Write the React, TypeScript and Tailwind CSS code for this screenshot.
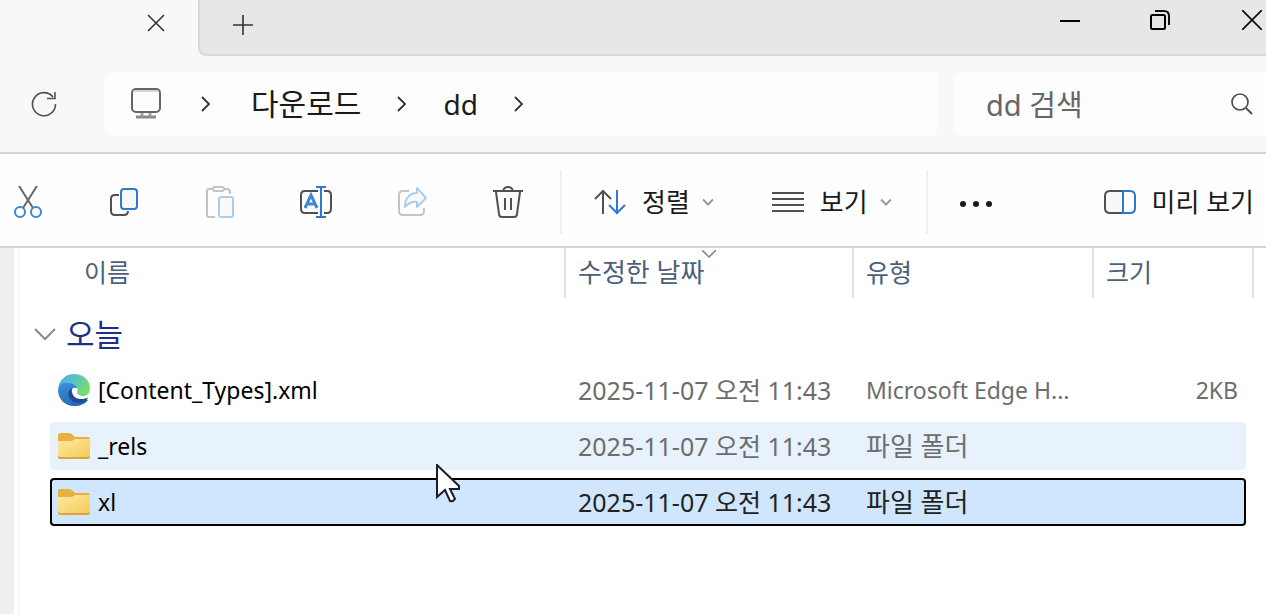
import type { ReactNode } from "react";

interface FileEntry {
  name: string;
  modified: string;
  type: string;
  size?: string;
  kind: "edge" | "folder";
  state?: "hover" | "selected";
}

const files: FileEntry[] = [
  {
    name: "[Content_Types].xml",
    modified: "2025-11-07 오전 11:43",
    type: "Microsoft Edge H...",
    size: "2KB",
    kind: "edge",
  },
  {
    name: "_rels",
    modified: "2025-11-07 오전 11:43",
    type: "파일 폴더",
    kind: "folder",
    state: "hover",
  },
  {
    name: "xl",
    modified: "2025-11-07 오전 11:43",
    type: "파일 폴더",
    kind: "folder",
    state: "selected",
  },
];

const rowStyles = {
  none: "border-transparent",
  hover: "border-[#e8f2fd] bg-[#e8f2fd]",
  selected: "border-black bg-[#d0e6fd]",
};

interface IconProps {
  width?: number;
  height?: number;
  children: ReactNode;
}

function Icon({ width = 32, height = 32, children }: IconProps) {
  return (
    <svg
      width={width}
      height={height}
      viewBox={`0 0 ${width} ${height}`}
      fill="none"
      stroke="#505050"
      strokeWidth="2"
      className="shrink-0"
      aria-hidden="true"
    >
      {children}
    </svg>
  );
}

function CrumbChevron() {
  return (
    <Icon width={10} height={18}>
      <path d="M1 2 8 9 1 16" stroke="#333" strokeWidth="1.8" />
    </Icon>
  );
}

function MenuChevron() {
  return (
    <Icon width={12} height={8}>
      <path d="m1 1.5 5 5 5-5" stroke="#9a9a9a" />
    </Icon>
  );
}

function EdgeIcon() {
  return (
    <svg width="32" height="32" viewBox="0 0 32 32" aria-hidden="true">
      <defs>
        <linearGradient id="edge-top" x1="0" y1="0.3" x2="1" y2="0.7">
          <stop offset="0" stopColor="#4aaeea" />
          <stop offset="0.5" stopColor="#5cc7b8" />
          <stop offset="1" stopColor="#7fe05c" />
        </linearGradient>
        <linearGradient id="edge-body" x1="0" y1="0" x2="0.6" y2="1">
          <stop offset="0" stopColor="#3d93de" />
          <stop offset="1" stopColor="#2463b8" />
        </linearGradient>
      </defs>
      <path
        d="M0 15C1 6 8 0 16 0c9 0 16 6 16 14 0 6-3 8-7 8-4 0-7-1-7-4L10 10C6 9 2 11 0 15Z"
        fill="url(#edge-top)"
      />
      <path
        d="M0 16C1 11 5 8 10 9c5 0 9 3 9 6l-3 5 14 6c-3 4-8 6-14 6C7 32 0 25 0 16Z"
        fill="url(#edge-body)"
      />
      <path
        d="M14 14c-4 2-5 8-1 12 4 4 11 3 14 1 2-1 3-3 3-4-5 2-14 0-14-5Z"
        fill="#1f4b93"
      />
      <path
        d="M14 18c-1-3 1-5 4-4 2 0 2 2 1 4 1 4 6 5 11 4l1 1c-8 4-16 2-17-5Z"
        fill="#fff"
      />
    </svg>
  );
}

function FolderIcon() {
  return (
    <svg width="32" height="26" viewBox="0 0 32 26" aria-hidden="true">
      <defs>
        <linearGradient id="folder-front" x1="0" y1="0" x2="1" y2="1">
          <stop offset="0" stopColor="#fde9a6" />
          <stop offset="1" stopColor="#f5cb55" />
        </linearGradient>
      </defs>
      <path
        d="M0 2q0-2 2-2h9q2 0 4 2l2 2h13q2 0 2 2v18H0Z"
        fill="#e8b13c"
      />
      <path d="M0 8h14l3-2h15v18q0 2-2 2H2q-2 0-2-2Z" fill="#d9a441" />
      <path d="M0 8h14l3-2h15v16q0 2-2 2H2q-2 0-2-2Z" fill="url(#folder-front)" />
    </svg>
  );
}

function TabStrip() {
  return (
    <header className="flex h-14 bg-[#f8f8f8]">
      <div className="flex w-[198px] items-start justify-end pr-[26px]">
        <button
          type="button"
          aria-label="탭 닫기"
          className="flex h-[46px] w-8 items-center justify-center"
        >
          <Icon width={18} height={18}>
            <path d="m1 1 16 16M17 1 1 17" stroke="#333" strokeWidth="1.6" />
          </Icon>
        </button>
      </div>
      <div className="flex flex-1 items-start justify-between overflow-hidden rounded-bl-lg border-b-2 border-l-2 border-[#d9d9d9] bg-[#e7e7e7]">
        <button
          type="button"
          aria-label="새 탭"
          className="flex h-[50px] w-[86px] items-center justify-center"
        >
          <Icon width={22} height={22}>
            <path d="M11 1v20M1 11h20" stroke="#333" strokeWidth="1.6" />
          </Icon>
        </button>
        <div className="-mr-8 flex">
          <button
            type="button"
            aria-label="최소화"
            className="flex h-10 w-[88px] items-center justify-center"
          >
            <Icon width={20} height={20}>
              <path d="M0 11h20" stroke="#000" />
            </Icon>
          </button>
          <button
            type="button"
            aria-label="이전 크기로 복원"
            className="flex h-10 w-[92px] items-center justify-center"
          >
            <Icon width={20} height={20}>
              <rect x="1" y="5" width="14" height="14" rx="1.5" stroke="#000" />
              <path d="M5 1h9q5 0 5 5v9" stroke="#111" />
            </Icon>
          </button>
          <button
            type="button"
            aria-label="닫기"
            className="flex h-10 w-[92px] items-center justify-center"
          >
            <Icon width={20} height={20}>
              <path d="m0 0 20 20M20 0 0 20" stroke="#111" strokeWidth="1.8" />
            </Icon>
          </button>
        </div>
      </div>
    </header>
  );
}

function AddressBar() {
  return (
    <div className="flex h-[98px] items-center gap-4 border-b-2 border-[#d5d5d5] bg-[#f8f8f8]">
      <button
        type="button"
        aria-label="새로 고침"
        className="flex h-16 w-[88px] shrink-0 items-center justify-center"
      >
        <Icon width={26} height={26}>
          <path d="M22 6A11.500 11.500 0 1 0 24.500 13M24 1v6.500h-8" strokeWidth="1.6" />
        </Icon>
      </button>
      <nav
        aria-label="경로"
        className="flex h-16 flex-1 items-center rounded-lg bg-[#fdfdfd] pl-[26px] text-[28px] text-[#1a1a1a]"
      >
        <Icon>
          <path d="M12 25v3M20 25v3" stroke="#a5a5a5" strokeWidth="3" />
          <path d="M6 29h20" stroke="#8a8a8a" strokeWidth="3" />
          <rect x="2" y="1" width="28" height="23" rx="4" stroke="#666" />
          <path d="M4 3h24" stroke="#d4d4d4" />
        </Icon>
        <span className="ml-[39px] flex items-center">
          <CrumbChevron />
        </span>
        <a href="#downloads" className="ml-10 text-[30px]">
          다운로드
        </a>
        <span className="ml-9 flex items-center">
          <CrumbChevron />
        </span>
        <a href="#dd" className="ml-9">
          dd
        </a>
        <span className="ml-9 flex items-center">
          <CrumbChevron />
        </span>
      </nav>
      <label className="flex h-16 w-[312px] items-center rounded-l-lg bg-[#fdfdfd] pr-3 pl-8">
        <input
          type="search"
          aria-label="dd 검색"
          placeholder="dd 검색"
          className="min-w-0 flex-1 bg-transparent text-[29px] outline-none placeholder:text-[#666]"
        />
        <Icon width={24} height={24}>
          <circle cx="10" cy="10" r="8" strokeWidth="1.7" />
          <path d="m16 16 6 6" />
        </Icon>
      </label>
    </div>
  );
}

function ToolButton({ label, children }: { label: string; children: ReactNode }) {
  return (
    <button
      type="button"
      aria-label={label}
      className="flex h-16 w-24 shrink-0 items-center justify-center"
    >
      {children}
    </button>
  );
}

function Toolbar() {
  return (
    <div className="flex h-[94px] items-center overflow-hidden border-b-2 border-[#d5d5d5] bg-[#fefefe] pt-1 text-[26px] whitespace-nowrap text-[#1a1a1a]">
      <div className="-ml-5 flex">
        <ToolButton label="잘라내기">
          <Icon>
            <path d="m7 0 14 22M25 0 11 22" stroke="#666" />
            <circle cx="8" cy="26" r="5" stroke="#3f86d6" />
            <circle cx="24" cy="26" r="5" stroke="#3f86d6" />
          </Icon>
        </ToolButton>
        <ToolButton label="복사">
          <Icon>
            <path d="M11 9H7q-4 0-4 4v12q0 4 4 4h9q4 0 4-4" />
            <rect x="13" y="3" width="16" height="20" rx="3" fill="#f7f7f7" stroke="#2f78d2" />
          </Icon>
        </ToolButton>
        <ToolButton label="붙여넣기">
          <Icon>
            <path
              d="M9 3H5q-2 0-2 2v24q0 2 2 2h6M20 3h3q3 0 3 3v2"
              stroke="#c4c4c4"
            />
            <rect x="9" y="1" width="11" height="4" rx="2" stroke="#c4c4c4" />
            <rect x="15" y="11" width="14" height="20" rx="2" fill="#fafafa" stroke="#a9cdf0" />
          </Icon>
        </ToolButton>
        <ToolButton label="이름 바꾸기">
          <Icon>
            <path d="M18 5H5q-4 0-4 4v14q0 4 4 4h13M24 5h3q4 0 4 4v14q0 4-4 4h-3" />
            <path d="m5 22 6-13 6 13M7 18h8" stroke="#3f86d6" strokeWidth="3" />
            <path d="M16 1h10M21 1v30M16 31h10" stroke="#2f78d2" />
          </Icon>
        </ToolButton>
        <ToolButton label="공유">
          <Icon>
            <path d="M13 5H7q-4 0-4 4v16q0 4 4 4h17q4 0 4-4v-3" stroke="#c4c4c4" />
            <path
              d="M21 2v5C13 7 9 13 9 21c4-4 7-6 12-5v5l9-9Z"
              fill="#fafafa"
              stroke="#a9cdf0"
              strokeLinejoin="round"
            />
          </Icon>
        </ToolButton>
        <ToolButton label="삭제">
          <Icon>
            <path d="M4 6h24l-3 23q0 2-3 2H10q-3 0-3-2Z" fill="#fafafa" stroke="none" />
            <path d="M1 5h30M4 6l3 22q0 3 3 3h12q3 0 3-3l3-22M11 5q1-4 5-4t5 4M13 12v12M19 12v12" />
          </Icon>
        </ToolButton>
      </div>
      <div className="ml-1 flex flex-1 items-center">
        <div className="h-16 w-0.5 shrink-0 bg-[#efefef]" />
        <button type="button" className="ml-8 flex shrink-0 items-center">
          <Icon>
            <path d="M9 28V5M1 13l8-8 8 8" />
            <path d="M23 4v24M15 19l8 8 8-8" stroke="#2f78d2" />
          </Icon>
          <span className="ml-4">정렬</span>
          <span className="ml-3">
            <MenuChevron />
          </span>
        </button>
        <button type="button" className="ml-[58px] flex shrink-0 items-center">
          <Icon>
            <path d="M0 7h32M0 13h32M0 19h32M0 25h32" />
          </Icon>
          <span className="ml-4">보기</span>
          <span className="ml-3">
            <MenuChevron />
          </span>
        </button>
        <div className="ml-[34px] h-16 w-0.5 shrink-0 bg-[#efefef]" />
        <button type="button" aria-label="자세히" className="ml-8 flex shrink-0">
          <Icon>
            <g fill="#1a1a1a" stroke="none">
              <circle cx="3" cy="18" r="3" />
              <circle cx="16" cy="18" r="3" />
              <circle cx="29" cy="18" r="3" />
            </g>
          </Icon>
        </button>
      </div>
      <button type="button" className="mr-3 flex shrink-0 items-center">
        <Icon>
          <path d="M19 5H6q-5 0-5 5v12q0 5 5 5h13" fill="#f8f8f8" />
          <path d="M19 5h7q5 0 5 5v12q0 5-5 5h-7Z" stroke="#2f78d2" />
        </Icon>
        <span className="ml-4">미리 보기</span>
      </button>
    </div>
  );
}

function FileRow({ file }: { file: FileEntry }) {
  const cell = `flex h-12 items-center border-y-2 ${rowStyles[file.state ?? "none"]}`;
  const color = file.state === "selected" ? "text-[#222]" : "text-[#6d6d6d]";
  const typeSize = file.kind === "folder" ? "text-[26px]" : "text-[23px]";

  return (
    <tr aria-selected={file.state === "selected"} className={color}>
      <td className="py-1 pl-[30px]">
        <div
          className={`${cell} gap-2 rounded-l-sm border-l-2 pl-1.5 text-[23px] text-black`}
        >
          {file.kind === "edge" ? <EdgeIcon /> : <FolderIcon />}
          <span>{file.name}</span>
        </div>
      </td>
      <td className="py-1">
        <div className={`${cell} pl-3 text-[25px]`}>{file.modified}</div>
      </td>
      <td className="py-1">
        <div className={`${cell} pl-3 ${typeSize}`}>{file.type}</div>
      </td>
      <td className="py-1 pr-2">
        <div
          className={`${cell} justify-end rounded-r-sm border-r-2 pr-1.5 text-[23px]`}
        >
          {file.size}
        </div>
      </td>
    </tr>
  );
}

function FileList() {
  return (
    <table className="w-full table-fixed border-separate border-spacing-0 text-[25px] whitespace-nowrap">
      <colgroup>
        <col />
        <col className="w-72" />
        <col className="w-60" />
        <col className="w-40" />
      </colgroup>
      <thead>
        <tr className="h-[50px] text-left text-[#4c607a]">
          <th scope="col" className="border-r-2 border-[#e2e2e2] pb-0.5 pl-16 font-normal">
            이름
          </th>
          <th
            scope="col"
            aria-sort="descending"
            className="relative border-r-2 border-[#e2e2e2] pb-0.5 pl-3 text-[26px] font-normal"
          >
            수정한 날짜
            <span className="absolute inset-x-0 top-0.5 flex justify-center">
              <Icon width={14} height={8}>
                <path d="m0 0 7 7 7-7" stroke="#888" strokeWidth="1.6" />
              </Icon>
            </span>
          </th>
          <th scope="col" className="border-r-2 border-[#e2e2e2] pb-0.5 pl-3 font-normal">
            유형
          </th>
          <th scope="col" className="border-r-2 border-[#e2e2e2] pb-0.5 pl-3 font-normal">
            크기
          </th>
        </tr>
      </thead>
      <tbody>
        <tr className="h-16">
          <th scope="rowgroup" colSpan={4} className="pl-3.5 text-left font-normal">
            <button
              type="button"
              aria-expanded="true"
              className="flex items-center gap-2.5 pt-2 text-[31px] text-[#1f2f85]"
            >
              <Icon width={22} height={14}>
                <path d="m1 2 10 10L21 2" stroke="#8a8a8a" />
              </Icon>
              오늘
            </button>
          </th>
        </tr>
        {files.map((file) => (
          <FileRow key={file.name} file={file} />
        ))}
      </tbody>
    </table>
  );
}

function Pointer() {
  return (
    <svg
      width="26"
      height="40"
      viewBox="0 0 26 40"
      className="absolute top-[464px] left-[436px]"
      aria-hidden="true"
    >
      <path
        d="M1 1v32l8-7 5 11q3 1 5-2l-5-10h9v-3Z"
        fill="#fff"
        stroke="#1c1c2b"
        strokeWidth="2"
      />
    </svg>
  );
}

export default function App() {
  return (
    <div className="relative flex min-h-screen flex-col overflow-hidden bg-white font-['Noto_Sans','Noto_Sans_CJK_KR',sans-serif] leading-none">
      <TabStrip />
      <AddressBar />
      <Toolbar />
      <main className="flex flex-1">
        <div className="w-3.5 shrink-0 bg-[#efefef]" />
        <div className="ml-1 flex-1 border-l-2 border-[#f7f7f7] pr-3">
          <FileList />
        </div>
      </main>
      <Pointer />
    </div>
  );
}
